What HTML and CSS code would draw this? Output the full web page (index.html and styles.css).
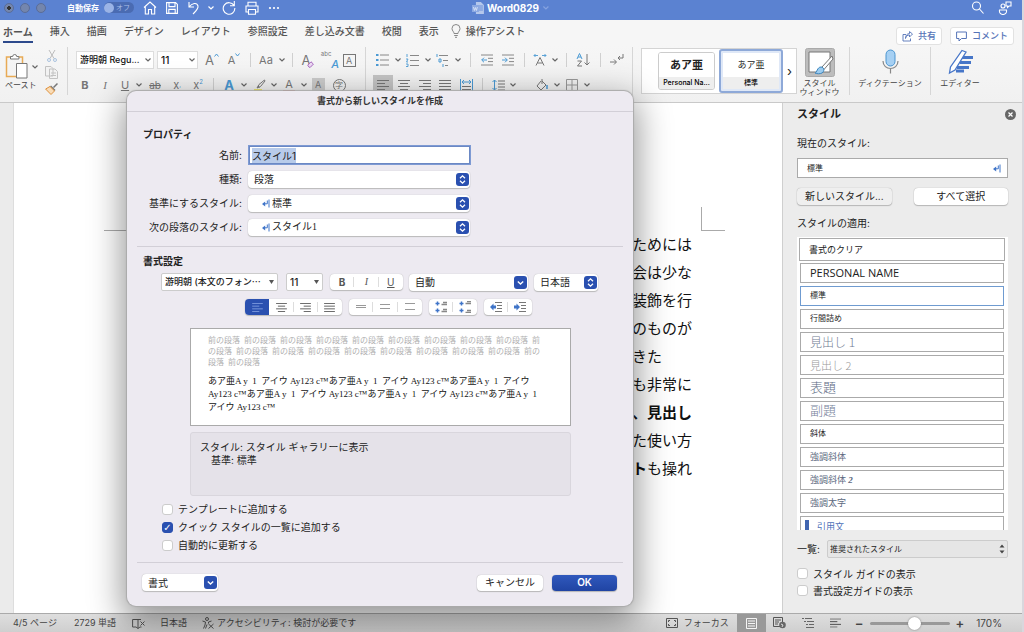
FILE: index.html
```html
<!DOCTYPE html>
<html lang="ja">
<head>
<meta charset="utf-8">
<title>Word0829</title>
<link rel="stylesheet" href="styles.css">
</head>
<body>
<svg class="defs" aria-hidden="true">
  <symbol id="chev" viewBox="0 0 8 6"><path d="M1.500 1.500 4 4l2.500-2.500" fill="none" stroke="currentColor" stroke-width="1.200"/></symbol>
  <symbol id="updown" viewBox="0 0 13 13"><rect width="13" height="13" rx="3" fill="#2a50b0"/><path d="M4 5.200 6.500 2.800 9 5.200M4 7.800l2.500 2.400L9 7.800" fill="none" stroke="#fff" stroke-width="1.300"/></symbol>
  <symbol id="down" viewBox="0 0 13 13"><rect width="13" height="13" rx="3" fill="#2a50b0"/><path d="M3.800 5.500 6.500 8l2.700-2.500" fill="none" stroke="#fff" stroke-width="1.400"/></symbol>
  <symbol id="para" viewBox="0 0 8 9"><path d="M7 .5v8M5.300 1.500v3.300H2" fill="none" stroke="#3f74c8"/><path d="M0 5l3.200-2.400v4.800z" fill="#3f74c8"/></symbol>
  <symbol id="al" viewBox="0 0 12 10"><path d="M0 .5h12M0 3.500h8M0 6.500h12M0 9.500h8" stroke="currentColor"/></symbol>
  <symbol id="ac" viewBox="0 0 12 10"><path d="M0 .5h12M2 3.500h8M0 6.500h12M2 9.500h8" stroke="currentColor"/></symbol>
  <symbol id="ar" viewBox="0 0 12 10"><path d="M0 .5h12M4 3.500h8M0 6.500h12M4 9.500h8" stroke="currentColor"/></symbol>
  <symbol id="aj" viewBox="0 0 12 10"><path d="M0 .5h12M0 3.500h12M0 6.500h12M0 9.500h12" stroke="currentColor"/></symbol>
</svg>
<div class="app">
  <header class="titlebar">
    <div class="tleft">
      <span class="light dot"></span><span class="light"></span><span class="light"></span>
      <label class="autosave" for="auto">自動保存</label>
      <button class="toggle" id="auto"><span class="knob"></span>オフ</button>
      <svg width="14" height="14" viewBox="0 0 14 14"><path d="M1 6.500 7 1l6 5.500M2.300 5.500V13H5.500V8.500h3V13h3.200V5.500" class="ln"/></svg>
      <svg width="12" height="14" viewBox="0 0 12 14"><path d="M.6 1.600h9l1.800 1.800v9H.6zM3 1.600v4h6v-4M2.800 12.400v-4h6.400v4" class="ln"/></svg>
      <svg width="13" height="14" viewBox="0 0 13 14"><path d="M2 1v5h5M2 6C5 2 10 1 11 5c.5 3-2 5-5 8" class="ln"/></svg>
      <svg class="chev wh" width="8" height="6"><use href="#chev"/></svg>
      <svg width="14" height="14" viewBox="0 0 14 14"><path d="M12 4.500A5.800 5.800 0 1 0 12.800 7M12.300 0v4.700H8" class="ln"/></svg>
      <svg width="14" height="14" viewBox="0 0 14 14"><path d="M3 5V1.200h8V5M3 11H1V5h12v6h-2M3.500 8.500h7v4.800h-7z" class="ln"/></svg>
      <svg width="12" height="4" viewBox="0 0 12 4" fill="#fff"><circle cx="2" cy="2" r="1.100"/><circle cx="6" cy="2" r="1.100"/><circle cx="10" cy="2" r="1.100"/></svg>
    </div>
    <div class="doctitle">
      <svg width="12" height="12" viewBox="0 0 12 12"><path d="M4 0h5l3 3v9H4z" fill="#b5c8ec"/><path d="M6 4h5M6 6h5M6 8h5" stroke="#6c8fd8"/><rect y="3" width="7" height="7" fill="#8ca9e2"/><path d="m1.500 5 1 3.500 1-3 1 3 1-3.500" stroke="#dfe8fa" fill="none" stroke-width=".8"/></svg>
      <span>Word0829</span><svg class="chev faint" width="8" height="6"><use href="#chev"/></svg>
    </div>
    <div class="tright">
      <svg width="13" height="13" viewBox="0 0 13 13"><circle cx="5.500" cy="5" r="4" class="ln"/><path d="m8.500 8 4 4.500" class="ln"/></svg>
      <svg width="14" height="14" viewBox="0 0 14 14"><circle cx="5" cy="5" r="2" class="ln"/><path d="M1.500 9h7c1 6-8 6-7 0zM8 1h5v4h-2L9.500 6.500V5H8z" class="ln"/></svg>
    </div>
  </header>

  <nav class="tabs">
    <a class="on" href="#">ホーム</a><a href="#">挿入</a><a href="#">描画</a><a href="#">デザイン</a><a href="#">レイアウト</a><a href="#">参照設定</a><a href="#">差し込み文書</a><a href="#">校閲</a><a href="#">表示</a>
    <a class="assist" href="#"><svg width="10" height="14" viewBox="0 0 10 14"><path d="M3 9.500C3 7.500 1 7 1 4.500a4 4 0 0 1 8 0C9 7 7 7.500 7 9.500zM3.200 11.500h3.600M4 13.300h2" fill="none" stroke="#888"/></svg>操作アシスト</a>
    <div class="tabbtns">
      <button class="pill"><svg width="11" height="11" viewBox="0 0 11 11"><path d="M4 3.500H1V10h7.500V7.500M3.500 7.500C4 5 5.500 4 7.500 4V6L10.500 3 7.500.6v2C5 2.600 3.500 4.500 3.500 7.500z" fill="none" stroke="#5674b8" stroke-width=".9"/></svg>共有</button>
      <button class="pill"><svg width="11" height="11" viewBox="0 0 11 11"><path d="M.6 1h9.800v6.500H5.500L3 10V7.500H.6z" fill="none" stroke="#5674b8"/></svg>コメント</button>
    </div>
  </nav>

  <section class="ribbon">
    <div class="paste">
      <button class="pastebtn">
        <span class="pasteicon"><svg width="24" height="25" viewBox="0 0 24 25"><path d="M6 3H1.500v19.500H11M14 3h3.500v6" fill="none" stroke="#e8aa55" stroke-width="1.500"/><path d="M5.500 5V2.500h2.200a2 2 0 0 1 4 0h2.200V5z" fill="#fff" stroke="#777"/><path d="M11.500 9.500H22V24H11.500z" fill="#fff" stroke="#777"/></svg><svg class="chev" width="8" height="6"><use href="#chev"/></svg></span>
        ペースト
      </button>
      <div class="clip">
        <svg width="10" height="12" viewBox="0 0 10 12"><path d="m2 0 5 8.500M8 0 3 8.500" stroke="#bbb" fill="none"/><circle cx="2" cy="10" r="1.500" fill="none" stroke="#a9c2df"/><circle cx="8" cy="10" r="1.500" fill="none" stroke="#a9c2df"/></svg>
        <svg width="13" height="13" viewBox="0 0 13 13"><path d="M.5.500H6l2 2V10H.5zM4.500 3H10l2.500 2.500v7h-8zM6 7h5M6 9.500h5" fill="#f2f2f2" stroke="#c2c2c2"/></svg>
        <svg width="13" height="12" viewBox="0 0 13 12"><path d="M12.500.500 8.500 4.500M5.500 3l4.500 4.500" stroke="#777" stroke-width="1.500"/><path d="M5 3.500.6 6 6 11.500 9.500 8z" fill="#f8dcb8" stroke="#df923e"/></svg>
      </div>
    </div>
    <i class="vsep"></i>
    <div class="rows fontg">
      <div class="row">
        <span class="cb w78"><select aria-label="フォント"><option>游明朝 Regu...</option></select><svg class="chev" width="8" height="6"><use href="#chev"/></svg></span>
        <span class="cb w41 size"><select aria-label="サイズ"><option>11</option></select><svg class="chev" width="8" height="6"><use href="#chev"/></svg></span>
        <button class="w22 big">A<svg width="5" height="4" viewBox="0 0 5 4"><path d="M.5 3.500 2.500 1l2 2.500" fill="none" stroke="#4b9ad4"/></svg></button>
        <button class="w22 mid">A<svg width="5" height="4" viewBox="0 0 5 4"><path d="m.5.500 2 2.500 2-2.500" fill="none" stroke="#4b9ad4"/></svg></button>
        <i class="s w10"></i>
        <button class="w22">Aa</button><svg class="chev w10"><use href="#chev"/></svg><i class="s w10"></i>
        <button class="w22 big">A<svg class="eraser" width="7" height="7" viewBox="0 0 7 7"><path d="M.7 4.200 4 .8l2.400 2.300L3.300 6.300H2.200z" fill="#ecd9f3" stroke="#a667be"/></svg></button>
        <button class="w22 abc"><small>abc</small><b>A</b></button>
        <button class="w16"><span class="boxa">A</span></button>
      </div>
      <div class="row">
        <button class="w18"><b>B</b></button><button class="w22 it">I</button><button class="w18 un">U</button><svg class="chev w10"><use href="#chev"/></svg>
        <button class="w22 st">ab</button><button class="w22">x<sub>,</sub></button><button class="w20">x<sup>2</sup></button><i class="s w10"></i>
        <button class="w22 glow">A</button><svg class="chev w8"><use href="#chev"/></svg>
        <button class="w22"><svg width="13" height="13" viewBox="0 0 13 13"><path d="M11.500 1 6 5.500 4 9l3.500-1.500L12 2zM5 7l1.500 1.500" fill="none" stroke="#777"/><path d="M1 11.500h8" stroke="#ece23c" stroke-width="2.500"/></svg></button><svg class="chev w8"><use href="#chev"/></svg>
        <button class="w22"><span class="red">A</span></button><svg class="chev w8"><use href="#chev"/></svg>
        <button class="w20"><span class="shade">A</span></button><button class="w22"><span class="circ">字</span></button>
      </div>
    </div>
    <i class="vsep"></i>
    <div class="rows parag">
      <div class="row">
        <button class="w20"><svg width="14" height="12" viewBox="0 0 14 12"><path d="M0 1h2.500M0 6h2.500M0 11h2.500" stroke="#4b9ad4" stroke-width="2"/><path d="M4 1h9M4 6h9M4 11h9" stroke="#888"/></svg></button><svg class="chev w10"><use href="#chev"/></svg>
        <button class="w20"><svg width="14" height="13" viewBox="0 0 14 13"><path d="M1 0v3M0 5h2L.5 8H2M0 10h2v2.500H0" fill="none" stroke="#4b9ad4" stroke-width=".9"/><path d="M4 1.500h9M4 6.500h9M4 11.500h9" stroke="#888"/></svg></button><svg class="chev w10"><use href="#chev"/></svg>
        <button class="w20"><svg width="14" height="13" viewBox="0 0 14 13"><path d="M1 0v3M3 5h2v3H3zM7 10v3" fill="none" stroke="#4b9ad4"/><path d="M3 1.500h9M7 6.500h5M9 11.500h3" stroke="#888"/></svg></button><svg class="chev w10"><use href="#chev"/></svg>
        <i class="s w14"></i>
        <button class="w20"><svg width="12" height="12" viewBox="0 0 12 12"><path d="M0 1h12M7 4.300h5M7 7.600h5M0 11h12" stroke="#888"/><path d="M6 6H.8M3 3.700.7 6 3 8.300" fill="none" stroke="#4b9ad4"/></svg></button>
        <button class="w22"><svg width="12" height="12" viewBox="0 0 12 12"><path d="M0 1h12M7 4.300h5M7 7.600h5M0 11h12" stroke="#888"/><path d="M0 6h5.200M3 3.700 5.300 6 3 8.300" fill="none" stroke="#4b9ad4"/></svg></button>
        <i class="s w10"></i>
        <button class="w22"><svg width="14" height="12" viewBox="0 0 14 12"><path d="m3 11.500 4-8 4 8M4.500 9h5" fill="none" stroke="#777"/><path d="M5 1.500H1M2.500 0 1 1.500 2.500 3M9 1.500h4M11.500 0 13 1.500 11.500 3" fill="none" stroke="#4b9ad4" stroke-width=".9"/></svg></button><svg class="chev w8"><use href="#chev"/></svg><i class="s w14"></i>
        <button class="w20"><svg width="14" height="14" viewBox="0 0 14 14"><path d="M1 6 3.500.500 6 6M2 4h3" fill="none" stroke="#4b9ad4"/><path d="M1.500 8h4l-4 5h4.500M11 1v11M8.500 9.500 11 12l2.500-2.500" fill="none" stroke="#777"/></svg></button>
        <i class="s w14"></i>
        <button class="w20"><svg width="14" height="12" viewBox="0 0 14 12"><path d="M13 0v4H8M10 2 8 4l2 2M0 8h6M4 5.500 6.500 8 4 10.500" fill="none" stroke="#777"/></svg></button>
      </div>
      <div class="row">
        <button class="w20 press"><svg width="12" height="10"><use href="#al"/></svg></button>
        <button class="w22"><svg width="12" height="10"><use href="#ac"/></svg></button>
        <button class="w20"><svg width="12" height="10"><use href="#ar"/></svg></button>
        <button class="w20"><svg width="12" height="10"><use href="#aj"/></svg></button>
        <button class="w22"><svg width="13" height="12" viewBox="0 0 13 12"><path d="M.5 0v12M12.500 0v12M2 3h9M4 1 2 3l2 2M9 1l2 2-2 2" fill="none" stroke="#4b9ad4"/><path d="M2 7.500h9M2 10.500h9" stroke="#777"/></svg></button>
        <i class="s w10"></i>
        <button class="w22"><svg width="13" height="12" viewBox="0 0 13 12"><path d="M2.500 1v10M.5 3l2-2 2 2M.5 9l2 2 2-2" fill="none" stroke="#4b9ad4"/><path d="M6 2h7M6 5h7M6 8h7M6 11h7" stroke="#777"/></svg></button><svg class="chev w8"><use href="#chev"/></svg>
        <i class="w14"></i>
        <button class="w22"><svg width="12" height="12" viewBox="0 0 12 12"><path d="M5 2 1 7l4 4 5-5-4-4M6 0v5" fill="none" stroke="#777"/><path d="M11 6v4" stroke="#4b9ad4" stroke-width="1.500"/></svg></button><svg class="chev w8"><use href="#chev"/></svg>
        <button class="w22"><svg width="12" height="12" viewBox="0 0 12 12"><path d="M.5.500h11v11H.5zM6 0v12M0 6h12" fill="none" stroke="#999"/></svg></button><svg class="chev w8"><use href="#chev"/></svg>
      </div>
    </div>
    <i class="vsep"></i>
    <div class="gallery">
      <button class="card"><span class="smp bold">あア亜</span><span class="cap">Personal Na...</span></button>
      <button class="card sel"><span class="smp">あア亜</span><span class="cap">標準</span></button>
      <button class="more">›</button>
    </div>
    <button class="tool swin"><svg width="30" height="29" viewBox="0 0 30 29"><rect x=".5" y=".5" width="29" height="28" rx="2" fill="#bdbdbd" stroke="#aaa"/><path d="M4 4h21v20H4z" fill="#fff" stroke="#777"/><path d="M27 8 17 19l2 2.500L28 11z" fill="#fff" stroke="#777"/><path d="M10 25c2 0 2-6 6-6 3 0 4 4 1 6-2 1-5 1-7 0z" fill="#9ccbee" stroke="#3c86bf"/></svg>スタイル<br>ウィンドウ</button>
    <i class="vsep"></i>
    <button class="tool dict"><svg width="17" height="27" viewBox="0 0 17 27"><rect x="4" y="2" width="9" height="16" rx="4.500" fill="#a6d0f3" stroke="#4a94cf"/><path d="M1 13c0 10 15 10 15 0M8.500 20.500v5" fill="none" stroke="#888" stroke-width="1.200"/></svg>ディクテーション</button>
    <i class="vsep"></i>
    <button class="tool edit"><svg width="25" height="27" viewBox="0 0 25 27"><path d="M13 9.500h12M12 14.500h11M9 19.500h12M8 23h8" stroke="#4776c8" stroke-width="3"/><path d="M14 2.500 18 4 7 22l-5.500 3 1-6z" fill="#fff" stroke="#4776c8" stroke-width="1.300"/></svg>エディター</button>
  </section>

  <main class="body">
    <div class="gutter"></div>
    <article class="page">
      <div class="marks"><span class="ml"></span><span class="mr"></span></div>
      <div class="lines">
        <p>ためには</p><p>会は少な</p><p>装飾を行</p><p>のものが</p><p>きた</p><p>も非常に</p><p><b>、見出し</b></p><p>た使い方</p><p><b>ト</b>も操れ</p>
      </div>
    </article>
    <aside class="side">
      <div class="sidehead"><h2>スタイル</h2><button class="x" aria-label="閉じる"><svg width="11" height="11" viewBox="0 0 11 11"><circle cx="5.500" cy="5.500" r="5.500" fill="#666"/><path d="m3.500 3.500 4 4M7.500 3.500l-4 4" stroke="#fff" stroke-width="1.200"/></svg></button></div>
      <p class="lab">現在のスタイル:</p>
      <div class="cur"><span>標準</span><svg width="8" height="9"><use href="#para"/></svg></div>
      <div class="two"><button class="dim">新しいスタイル...</button><button>すべて選択</button></div>
      <p class="lab">スタイルの適用:</p>
      <ul class="list">
        <li class="first">書式のクリア</li><li class="pn">PERSONAL NAME</li><li class="cursel">標準</li><li>行間詰め</li><li class="h1s">見出し 1</li><li class="h2s">見出し 2</li><li class="ttl">表題</li><li class="sub">副題</li><li>斜体</li><li class="em">強調斜体</li><li class="em">強調斜体 <i>2</i></li><li class="em">強調太字</li><li class="quote">引用文</li>
      </ul>
      <div class="filter"><label for="flt">一覧:</label><span class="fsel"><select id="flt"><option>推奨されたスタイル</option></select><svg width="6" height="10" viewBox="0 0 6 10"><path d="M.5 3.500 3 .5l2.500 3zM.5 6.500 3 9.500l2.500-3z" fill="#444"/></svg></span></div>
      <label class="ck"><input type="checkbox">スタイル ガイドの表示</label>
      <label class="ck"><input type="checkbox">書式設定ガイドの表示</label>
    </aside>
  </main>

  <footer class="status">
    <span class="s1">4/5 ページ</span><span class="s2">2729 単語</span>
    <svg class="s3" width="13" height="11" viewBox="0 0 13 11"><path d="M6 1.500v9M6 1.500H.6v7.500H4l2 1.500 2-1.500h1.500M6 1.500h3M8.500 3.500l4 4M12.500 3.500l-4 4" fill="none" stroke="#555"/></svg>
    <span class="s4">日本語</span>
    <svg class="s5" width="12" height="12" viewBox="0 0 12 12"><circle cx="5" cy="2" r="1.500" fill="none" stroke="#555"/><path d="m.5 4 3 1-.5 3L1.500 11.500M9.500 4l-3 1v1.500M5 7.500 3.500 11.500M6.500 7l5 4.500M11.500 7l-5 4.500" fill="none" stroke="#555"/></svg>
    <span class="s6">アクセシビリティ: 検討が必要です</span>
    <div class="sr">
      <svg width="12" height="10" viewBox="0 0 12 10"><path d="M.5.500h11v9H.5zM2.500 4V2.500H4M8 2.500h1.500V4M9.500 6v1.500H8M4 7.500H2.500V6" fill="none" stroke="#555"/></svg>
      <span>フォーカス</span>
      <button class="view"><svg width="11" height="11" viewBox="0 0 11 11"><path d="M.5.500h10v10H.5zM2 3h7M2 5.500h7M2 8h7" fill="none" stroke="#f5f5f5"/></svg></button>
      <svg width="13" height="12" viewBox="0 0 13 12"><path d="M.5.500h9v9H.5zM2 3h6M2 5h4M2 7h3" fill="none" stroke="#555"/><circle cx="9.500" cy="8" r="3.300" fill="#666"/><path d="m8 7 2 1-1 2" stroke="#ddd" fill="none"/></svg>
      <svg class="o" width="12" height="10" viewBox="0 0 12 10"><path d="M0 .5h2M3 .5h7M2 3.500h2M5 3.500h7M4 6.500h2M7 6.500h5M4 9.500h8" stroke="#666"/></svg>
      <svg class="o" width="11" height="10" viewBox="0 0 12 10"><use href="#al"/></svg>
      <span class="pm">−</span><input class="zoom" type="range" aria-label="ズーム" min="0" max="100" value="58"><span class="pm">+</span><span class="pct">170%</span>
    </div>
  </footer>

  <form class="dialog" onsubmit="return false">
    <h1>書式から新しいスタイルを作成</h1>
    <div class="dbody">
      <h3>プロパティ</h3>
      <div class="props">
        <label for="nm">名前:</label><input id="nm" class="name" type="text" value="スタイル1">
        <label for="kd">種類:</label><span class="pop"><select id="kd"><option>段落</option></select><svg class="chip" width="13" height="13"><use href="#updown"/></svg></span>
        <label for="bs">基準にするスタイル:</label><span class="pop ind"><svg width="8" height="9"><use href="#para"/></svg><select id="bs"><option>標準</option></select><svg class="chip" width="13" height="13"><use href="#updown"/></svg></span>
        <label for="nx">次の段落のスタイル:</label><span class="pop ind"><svg width="8" height="9"><use href="#para"/></svg><select id="nx" class="serif"><option>スタイル1</option></select><svg class="chip" width="13" height="13"><use href="#updown"/></svg></span>
      </div>
      <hr>
      <h3 class="fmt">書式設定</h3>
      <div class="frow">
        <span class="combo c1"><select aria-label="書式のフォント"><option>游明朝 (本文のフォン⋯</option></select><svg width="5" height="4" viewBox="0 0 5 4"><path d="M0 0h5L2.500 4z" fill="#555"/></svg></span>
        <span class="combo c2"><select aria-label="文字サイズ"><option>11</option></select><svg width="5" height="4" viewBox="0 0 5 4"><path d="M0 0h5L2.500 4z" fill="#555"/></svg></span>
        <div class="seg biu"><button><b>B</b></button><button class="it">I</button><button class="un">U</button></div>
        <span class="pop color"><select aria-label="色"><option>自動</option></select><svg class="chip" width="13" height="13"><use href="#down"/></svg></span>
        <span class="pop lang"><select aria-label="言語"><option>日本語</option></select><svg class="chip" width="13" height="13"><use href="#updown"/></svg></span>
      </div>
      <div class="arow">
        <div class="seg four"><button class="act"><svg width="11" height="9" viewBox="0 0 12 10"><use href="#al"/></svg></button><button><svg width="11" height="9"><use href="#ac"/></svg></button><button><svg width="11" height="9"><use href="#ar"/></svg></button><button><svg width="11" height="9"><use href="#aj"/></svg></button></div>
        <div class="seg three"><button><svg width="10" height="6" viewBox="0 0 10 6"><path d="M0 1.500h10M0 3.500h10" stroke="#999"/></svg></button><button><svg width="10" height="6" viewBox="0 0 10 6"><path d="M0 .5h10M0 4.500h10" stroke="#999"/></svg></button><button><svg width="10" height="8" viewBox="0 0 10 8"><path d="M0 .5h10M0 6.500h10" stroke="#999"/></svg></button></div>
        <div class="seg twob"><button><svg width="13" height="12" viewBox="0 0 13 12"><path d="M2.500.5v4M.5 2.500h4M2.500 7.500v4M.5 9.500h4" stroke="#3f74c8" stroke-width="1.500"/><path d="M8 1.500h4M6.500 3.500h5.500M8 8.500h4M6.500 10.500h5.500" stroke="#888" stroke-width="1.500"/></svg></button><button><svg width="13" height="12" viewBox="0 0 13 12"><path d="M2.500.5v4M.5 2.500h4M2.500 7.500v4M.5 9.500h4" stroke="#3f74c8" stroke-width="1.500"/><path d="M8 .5h4M6.500 2.500h5.500M8 9.500h4M6.500 11.500h5.500" stroke="#888" stroke-width="1.500"/></svg></button></div>
        <div class="seg twob"><button><svg width="12" height="10" viewBox="0 0 12 10"><path d="M0 5l3.500-3.500v2H6v3H3.500v2z" fill="#3f74c8"/><path d="M5 .5h7M7 3.500h5M7 6.500h5M5 9.500h7" stroke="#777"/></svg></button><button><svg width="12" height="10" viewBox="0 0 12 10"><path d="M6 5 2.500 1.500v2H0v3h2.500v2z" fill="#3f74c8"/><path d="M5 .5h7M7 3.500h5M7 6.500h5M5 9.500h7" stroke="#777"/></svg></button></div>
      </div>
      <div class="preview">
        <p class="prev">前の段落  前の段落  前の段落  前の段落  前の段落  前の段落  前の段落  前の段落  前の段落  前
の段落  前の段落  前の段落  前の段落  前の段落  前の段落  前の段落  前の段落  前の段落  前の
段落  前の段落</p>
        <p class="samp">あア亜A y  1  アイウ Ay123 c™あア亜A y  1  アイウ Ay123 c™あア亜A y  1  アイウ
Ay123 c™あア亜A y  1  アイウ Ay123 c™あア亜A y  1  アイウ Ay123 c™あア亜A y  1
アイウ Ay123 c™</p>
      </div>
      <div class="desc"><p>スタイル: スタイル ギャラリーに表示</p><p class="in">基準: 標準</p></div>
      <div class="checks">
        <label class="ck"><input type="checkbox">テンプレートに追加する</label>
        <label class="ck"><input type="checkbox" checked>クイック スタイルの一覧に追加する</label>
        <label class="ck"><input type="checkbox">自動的に更新する</label>
      </div>
      <hr>
      <div class="foot">
        <span class="pop fm"><select aria-label="書式"><option>書式</option></select><svg class="chip" width="13" height="13"><use href="#down"/></svg></span>
        <button class="cancel">キャンセル</button><button class="ok">OK</button>
      </div>
    </div>
  </form>
</div>
<script src="app.js"></script>
</body>
</html>
```
FILE: styles.css
```css
* { box-sizing: border-box; }
body { margin: 0; background: #d9d7dd; font: 11px/16px Inter, "Noto Sans CJK JP", sans-serif; color: #222; }
button, select, input { font: inherit; color: inherit; border: 0; padding: 0; margin: 0; background: none; appearance: none; }
h1, h2, h3, p, ul { margin: 0; padding: 0; list-style: none; }
a { color: inherit; text-decoration: none; }
svg { flex: none; }
.defs { position: absolute; width: 0; height: 0; }
.app { position: relative; height: 100vh; margin-right: 2px; display: flex; flex-direction: column; overflow: hidden; background: #ececec; }
.ln { fill: none; stroke: #fff; stroke-width: 1.1; }
.chev { color: #666; }

.titlebar { flex: none; height: 20px; padding-bottom: 5px; background: #5b82d1; display: flex; align-items: center; justify-content: space-between; position: relative; color: #fff; }
.tleft { display: flex; align-items: center; gap: 9px; padding-left: 4px; }
.light { width: 10px; height: 10px; border-radius: 50%; background: #7486ad; border: 1px solid #5a6c98; margin-right: -3px; }
.dot { background: radial-gradient(circle, #333 2px, #7486ad 2px); }
.autosave { font-size: 8px; font-weight: 700; margin-left: 15px; margin-right: -4px; }
.toggle { width: 30px; height: 11px; border-radius: 6px; background: #4a6bb2; color: #a9bde6; font-size: 7px; line-height: 11px; display: flex; align-items: center; gap: 2px; }
.knob { width: 10px; height: 10px; border-radius: 50%; background: #9ab3e6; }
.chev.wh { color: #fff; margin: 0 -2px; }
.chev.faint { color: #86a3e0; }
.doctitle { position: absolute; left: 50%; top: 0; transform: translateX(-50%); height: 15px; display: flex; align-items: center; gap: 3px; font-weight: 700; font-size: 10px; }
.tright { display: flex; gap: 14px; padding-right: 10px; }

.tabs { flex: none; height: 25px; display: flex; align-items: center; padding: 0 8px 3px 3px; gap: 17px; background: #f6f6f6; font-size: 10px; color: #555; }
.tabs a { line-height: 18px; font-weight: 500; white-space: nowrap; }
.tabs .on { font-weight: 700; border-bottom: 2px solid #2d4a8c; margin-top: 3px; }
.tabs .assist { display: flex; align-items: center; gap: 5px; margin-left: -5px; }
.tabbtns { margin-left: auto; display: flex; gap: 8px; align-self: flex-end; }
.pill { height: 18px; background: #fff; border: 1px solid #e2e2e2; border-radius: 3px; padding: 0 5px; display: flex; align-items: center; gap: 5px; color: #5674b8; font-size: 9px; font-weight: 500; margin-bottom: -3px; }

.ribbon { flex: none; height: 58px; display: flex; align-items: flex-start; background: linear-gradient(#f6f6f6, #f1f1f1); border-bottom: 1px solid #c9c9c9; padding: 2px 0 0 5px; white-space: nowrap; }
.vsep { width: 1px; height: 48px; background: #d6d6d6; flex: none; }
.paste { display: flex; width: 62px; gap: 4px; padding-top: 3px; flex: none; }
.pastebtn { width: 36px; font-size: 8px; line-height: 12px; color: #444; text-align: left; }
.pasteicon { display: flex; align-items: center; gap: 2px; }
.clip { display: flex; flex-direction: column; gap: 4px; align-items: center; padding-left: 0; }
.rows { display: flex; flex-direction: column; gap: 3px; flex: none; padding-top: 2px; }
.fontg { width: 297px; padding-left: 8px; }
.parag { width: 266px; padding-left: 7px; }
.row { display: flex; align-items: center; height: 22px; color: #777; font-size: 11px; }
.row button { height: 20px; display: flex; align-items: center; justify-content: center; }
.row > svg.chev { height: 6px; }
.row button, .row i { flex: none; }
.row .s { height: 14px; background: linear-gradient(#d0d0d0, #d0d0d0) center / 1px 14px no-repeat; }
.w8 { width: 8px; } .w10 { width: 10px; } .w14 { width: 14px; } .w16 { width: 16px; } .w18 { width: 18px; } .w20 { width: 20px; } .w22 { width: 22px; } .w78 { width: 78px; } .w41 { width: 41px; }
.cb { flex: none; display: flex; align-items: center; background: #fff; border: 1px solid #ddd; height: 18px; padding: 0 1px 0 3px; margin-right: 3px; color: #111; font-size: 9px; font-weight: 500; }
.cb.size { font-size: 10px; }
.cb select { flex: 1; min-width: 0; }
.big { font-size: 13px; } .mid { font-size: 11px; }
.big svg, .mid svg { align-self: flex-start; margin-top: 3px; }
.big .eraser { align-self: flex-end; margin: 0 0 2px -3px; }
.abc small { font-size: 6px; line-height: 8px; align-self: flex-start; } .abc b { color: #4b9ad4; font-size: 11px; line-height: 12px; font-style: italic; font-weight: 500; align-self: flex-end; }
.boxa { width: 13px; height: 13px; border: 1px solid #777; line-height: 11px; font-size: 9px; }
.it { font-style: italic; font-family: "Liberation Serif", serif; } .un { text-decoration: underline; } .st { text-decoration: line-through; font-size: 10px; }
.row sub, .row sup { font-size: 6px; color: #4b9ad4; line-height: 1; } .row sup { align-self: flex-start; padding-top: 4px; }
.glow { color: #4b9ad4; font-weight: 700; font-size: 13px; } .red { border-bottom: 2px solid #d9534f; padding: 0 2px; line-height: 12px; }
.shade { width: 13px; height: 14px; line-height: 14px; background: #ccc; font-size: 9px; }
.circ { width: 13px; height: 13px; border: 1px solid #777; border-radius: 50%; line-height: 11px; font-size: 8px; }
.press { background: #c4c4c4; }

.gallery { display: flex; align-items: center; width: 156px; height: 46px; margin: 1px 8px 0 8px; border: 1px solid #d4d4d4; background: #fff; padding-left: 16px; flex: none; }
.card { width: 57px; height: 38px; border: 1px solid #ccc; border-radius: 3px; display: flex; flex-direction: column; overflow: hidden; background: #fff; }
.card.sel { width: 64px; height: 44px; margin-left: 4px; border: 2px solid #8ea9d8; background: #dfe8f7; padding: 2px; }
.smp { height: 24px; line-height: 24px; font-size: 9px; text-align: center; width: 100%; background: #fff; }
.smp.bold { font-size: 11px; font-weight: 700; }
.cap { flex: 1; width: 100%; font-size: 7px; font-weight: 500; line-height: 12px; background: #eee; text-align: center; color: #000; }
.more { flex: 1; font-size: 13px; color: #222; }
.tool { display: flex; flex-direction: column; align-items: center; font-size: 8px; line-height: 9px; color: #444; flex: none; gap: 2px; }
.swin { width: 29px; margin-right: 15px; padding-top: 1px; } .dict { width: 80px; padding-top: 1px; gap: 4px; } .edit { width: 58px; padding-top: 1px; gap: 4px; }

.body { flex: 1; min-height: 0; display: flex; }
.gutter { flex: none; width: 14px; background: #ebebeb; border-right: 1px solid #ddd; }
.page { flex: 1; background: #fff; padding-top: 104px; overflow: hidden; }
.marks { display: flex; justify-content: space-between; height: 24px; padding: 0 57px 0 90px; }
.ml, .mr { width: 24px; height: 24px; border-bottom: 1px solid #aaa; }
.mr { border-left: 1px solid #aaa; }
.lines { padding-left: 618px; font: 15px/28px "Liberation Serif", "Noto Sans CJK JP", serif; color: #111; white-space: nowrap; }
.side { flex: none; width: 240px; background: #ececec; border-left: 1px solid #cfcfcf; padding: 3px 14px 14px 14px; display: flex; flex-direction: column; font-size: 10px; }
.sidehead { display: flex; justify-content: space-between; margin-right: -8px; height: 16px; }
.sidehead h2 { font-size: 11px; }
.x { display: flex; align-items: center; }
.lab { margin-top: 13px; line-height: 16px; }
.cur { display: flex; justify-content: space-between; align-items: center; height: 20px; margin-top: 7px; border: 1px solid #aaa; background: #fff; padding: 0 6px 0 9px; font-size: 8px; flex: none; }
.two { display: flex; gap: 22px; margin-top: 10px; }
.two button { flex: 1; height: 17px; line-height: 15px; border-radius: 4px; background: #fff; box-shadow: 0 0 1px #999, 0 1px 1px #bbb; white-space: nowrap; }
.two .dim { background: #efefef; }
.two + .lab { margin-top: 10px; }
.list { flex: 1 1 0; min-height: 0; overflow: hidden; margin-top: 6px; background: #fff; padding: 1px 4px 0 3px; font: 8px/18px "Liberation Serif", "Noto Sans CJK JP", serif; color: #222; }
.list li { height: 20px; border: 1px solid #aaa; margin-bottom: 3px; padding-left: 9px; white-space: nowrap; }
.list .first { height: 23px; line-height: 22px; margin: 0 -1px 2px -1px; font-size: 9px; }
.list .pn { font-family: "Open Sans", sans-serif; font-size: 11px; }
.list .cursel { border-color: #6f9bd0; }
.list .h1s { font-size: 12px; color: #6f7c92; font-weight: 300; font-family: "Noto Sans CJK JP", sans-serif; } .list .h2s { font-size: 11px; color: #999; font-weight: 300; font-family: "Noto Sans CJK JP", sans-serif; }
.list .ttl, .list .sub { font-size: 13px; color: #5e6c84; font-weight: 300; } .list .sub { color: #77849b; }
.list .em { color: #5c6880; font-size: 9px; } .em i { font-weight: 700; }
.list .quote { color: #4d70b8; font-size: 9px; border-bottom: 0; padding-left: 4px; display: flex; align-items: center; }
.quote::before { content: ""; width: 4px; height: 14px; background: #4165b0; margin-right: 8px; }
.filter { display: flex; align-items: center; gap: 7px; margin-top: 10px; height: 18px; flex: none; }
.fsel { flex: 1; display: flex; align-items: center; height: 18px; border: 1px solid #ccc; border-radius: 2px; background: #e6e6e6; padding: 0 2px 0 2px; font-size: 8px; }
.fsel select { flex: 1; min-width: 0; }
.ck { display: flex; align-items: center; gap: 5px; height: 17px; font-size: 10px; white-space: nowrap; }
.ck input { width: 11px; height: 11px; border-radius: 3px; background: #fff; border: 1px solid #ccc; }
.side .ck { flex: none; } .filter + .ck { margin-top: 7px; }
.ck input:checked { border-color: #2a50b0; background: #2a50b0; display: grid; place-items: center; }
.ck input:checked::after { content: "✓"; color: #fff; font: 700 10px/9px "DejaVu Sans", sans-serif; }

.status { flex: none; height: 19px; display: flex; align-items: center; background: linear-gradient(#dedede, #cfcfcf); border-top: 1px solid #aaa; padding: 0 20px 0 13px; font-size: 9px; color: #444; white-space: nowrap; }
.s2 { margin-left: 17px; } .s3 { margin-left: 16px; } .s4 { margin-left: 15px; } .s5 { margin-left: 15px; } .s6 { margin-left: 3px; }
.sr { margin-left: auto; display: flex; align-items: center; gap: 6px; color: #444; }
.view { width: 29px; height: 18px; background: #999; display: flex; align-items: center; justify-content: center; margin: 0 1px 0 2px; }
.o { margin-left: 10px; } .pm { font-size: 13px; font-weight: 600; } .o + .pm { margin-left: 8px; }
.zoom { width: 80px; height: 3px; background: #999; border-radius: 2px; }
.zoom::-webkit-slider-thumb { appearance: none; width: 13px; height: 13px; border-radius: 50%; background: #fff; box-shadow: 0 0 2px #777; }
.pct { margin-left: 6px; font-size: 10px; }

.dialog { position: absolute; left: 127px; top: 91px; width: 506px; border-radius: 9px; background: #edeaf1; box-shadow: 0 0 1px 1px #aaa, 0 12px 34px 4px rgba(0,0,0,.42); font-size: 10px; color: #222; }
.dialog h1 { font-size: 9px; line-height: 20px; text-align: center; border-bottom: 1px solid #d2cfd7; color: #333; }
.dbody { padding: 13px 10px 15px; }
.dialog h3 { font-size: 10px; line-height: 18px; padding-left: 6px; }
.props { display: grid; grid-template-columns: 105px 223px; column-gap: 6px; grid-auto-rows: 24px; align-items: center; }
.props label { text-align: right; white-space: nowrap; }
.pop { display: flex; align-items: center; height: 17px; background: #fff; border-radius: 4px; box-shadow: 0 0 1px #aaa, 0 1px 1px #bbb; padding: 0 1px 0 6px; margin-right: 1px; }
.pop select { flex: 1; min-width: 0; }
.ind { padding-left: 14px; gap: 2px; }
.serif { font-family: "Liberation Serif", "Noto Sans CJK JP", serif; }
.name { height: 18px; background: #fff; border: 1px solid #6b88c4; box-shadow: 0 0 0 1px #7e9ad3; padding-left: 2px; outline: 0; margin: 0 1px; }
.name::selection { background: #b8cbea; color: #222; }
hr { border: 0; border-top: 1px solid #d2cfd7; margin: 7px 0 0; }
.fmt { margin-top: 5px; }
.frow { display: flex; align-items: center; padding-left: 24px; height: 18px; margin-top: 3px; }
.combo { display: flex; align-items: center; height: 18px; background: #fff; border: 1px solid #ccc; border-radius: 2px; padding: 0 3px 0 3px; font-size: 9px; font-weight: 500; }
.combo select { flex: 1; min-width: 0; }
.c1 { width: 117px; margin-right: 8px; } .c2 { width: 37px; margin-right: 7px; } .c2 { font-size: 10px; }
.seg { display: flex; height: 16px; background: #fff; border-radius: 4px; box-shadow: 0 0 1px #aaa, 0 1px 1px #bbb; overflow: hidden; color: #555; }
.seg button { flex: 1; display: flex; align-items: center; justify-content: center; background: linear-gradient(#ddd, #ddd) right / 1px 10px no-repeat; }
.seg button:last-child { background: none; }
.seg .act { background: #2a50b0; color: #7f9de0; }
.biu { width: 73px; margin-right: 6px; }
.color { width: 119px; margin-right: 6px; } .lang { width: 64px; margin: 0; }
.arow { display: flex; gap: 7px; padding-left: 108px; margin-top: 8px; }
.four { width: 97px; } .three { width: 73px; } .twob { width: 48px; }
.preview { height: 98px; margin: 13px 52px 0 53px; background: #fff; border: 1px solid #aaa; padding: 6px 17px; font: 8px/11px "Liberation Serif", "Noto Sans CJK JP", serif; overflow: hidden; }
.preview p { white-space: pre; }
.prev { color: #b0b0b0; }
.preview .samp { margin-top: 7px; font-size: 9px; line-height: 13px; color: #111; }
.desc { margin: 6px 52px 0 53px; height: 64px; background: #e5e2e9; border: 1px solid #d9d6dd; border-radius: 3px; padding: 8px 9px; line-height: 13px; }
.in { padding-left: 11px; }
.checks { padding: 4px 0 0 25px; }
.checks .ck { height: 18px; }
.checks + hr { margin-top: 8px; }
.foot { display: flex; align-items: center; padding-left: 5px; margin-top: 11px; }
.fm { width: 76px; margin-right: auto; }
.cancel, .ok { height: 16px; line-height: 15px; border-radius: 4px; background: #fff; box-shadow: 0 0 1px #999, 0 1px 1px #bbb; }
.cancel { width: 66px; } .ok { width: 65px; margin: 0 6px 0 9px; background: linear-gradient(#3059bd, #2044a3); color: #fff; font-weight: 600; }
```
FILE: app.js
```js
const nameField = document.getElementById("nm");
nameField.focus();
nameField.select();
```
